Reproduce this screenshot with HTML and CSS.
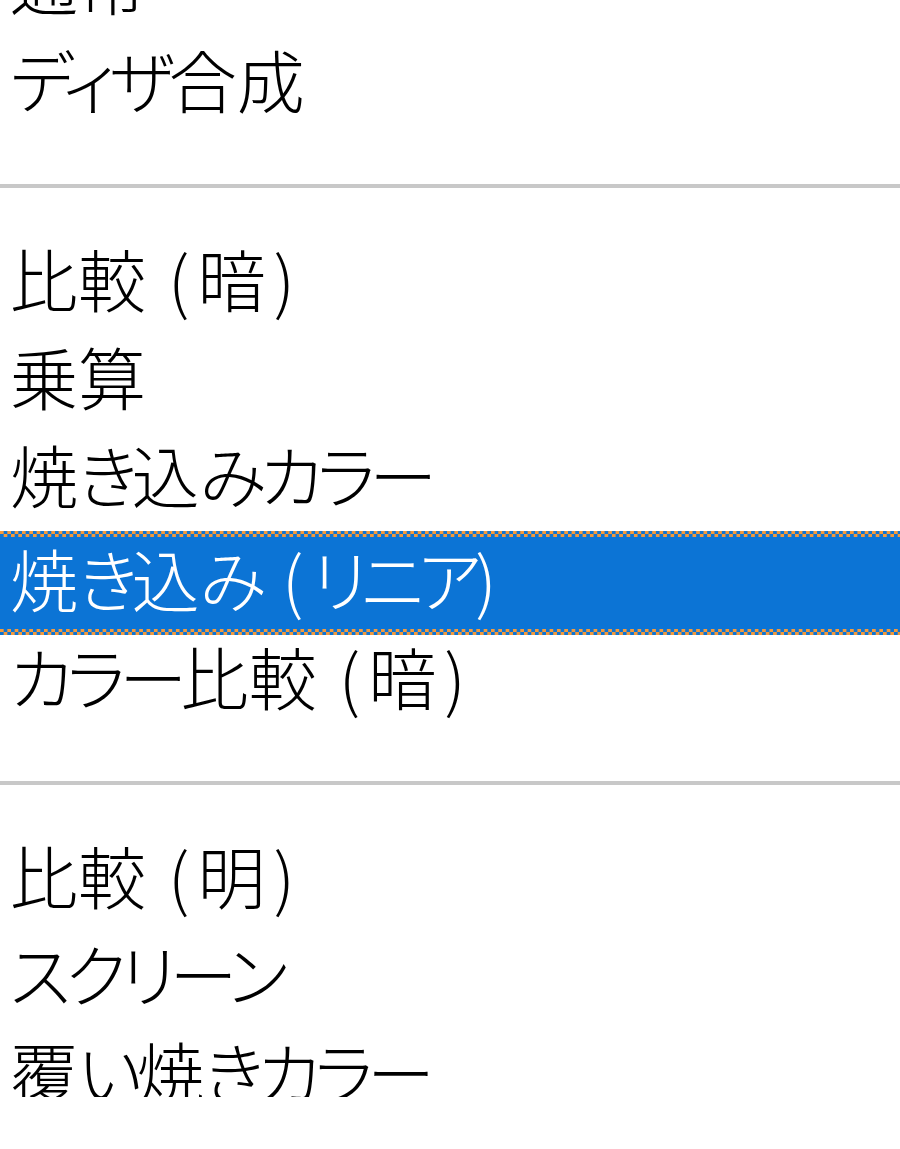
FILE: index.html
```html
<!DOCTYPE html>
<html lang="ja">
<head>
    <meta charset="UTF-8">
    <meta name="viewport" content="width=device-width, initial-scale=1.0">
    <title>描画モード</title>
    <link rel="stylesheet" href="styles.css">
</head>
<body>
    <!-- Blend mode dropdown list (scrolled) -->
    <div class="menu">
        <ul class="mode-list">
            <li class="item">通常</li>
            <li class="item"><span class="kana">ディザ</span>合成</li>
            <li class="sep"></li>
            <li class="item">比較<span class="paren">(暗)</span></li>
            <li class="item">乗算</li>
            <li class="item">焼<span class="kana">き</span>込<span class="kana">みカラー</span></li>
            <li class="item selected">焼<span class="kana">き</span>込<span class="kana">み</span><span class="paren">(<span class="kana">リニア</span>)</span></li>
            <li class="item"><span class="kana">カラー</span>比較<span class="paren">(暗)</span></li>
            <li class="sep"></li>
            <li class="item">比較<span class="paren">(明)</span></li>
            <li class="item"><span class="kana">スクリーン</span></li>
            <li class="item">覆<span class="kana">い</span>焼<span class="kana">きカラー</span></li>
            <li class="item">覆<span class="kana">い</span>焼<span class="kana">き</span><span class="paren">(<span class="kana">リニア</span>)</span> - 加算</li>
        </ul>
    </div>
</body>
</html>
```

FILE: styles.css
```css
body {
    margin: 0;
    background-color: #ffffff;
}

/* Visible part of the list */
.menu {
    height: 1097px;
    overflow: hidden;
}
.mode-list {
    list-style: none;
    margin: -60px 0 0 0;
    padding: 0;
}

/* Menu rows */
.item {
    height: 98px;
    box-sizing: border-box;
    padding-left: 10px;
    font-family: "Noto Sans CJK JP", sans-serif;
    font-weight: 300;
    font-size: 68px;
    line-height: 82px;
    font-feature-settings: "palt";
    white-space: nowrap;
    color: #000000;
}
.item .kana {
    letter-spacing: -6px;
}
.item .paren {
    margin-left: 22px;
    letter-spacing: 8px;
}
.item.selected {
    height: 104px;
    padding-top: 6px;
    color: #ffffff;
    /* dotted focus rectangle on top and bottom edges */
    background:
        conic-gradient(#0c74d5 0 25%, #f59a3a 0 50%, #0c74d5 0 75%, #f59a3a 0) left top / 7.33px 6px repeat-x,
        conic-gradient(#0c74d5 0 25%, #f59a3a 0 50%, #0c74d5 0 75%, #f59a3a 0) left bottom / 7.33px 6px repeat-x,
        #0c74d5;
}

/* Group separator */
.sep {
    height: 4px;
    margin: 48px 0 49px 0;
    background-color: #c8c8c8;
}
```
